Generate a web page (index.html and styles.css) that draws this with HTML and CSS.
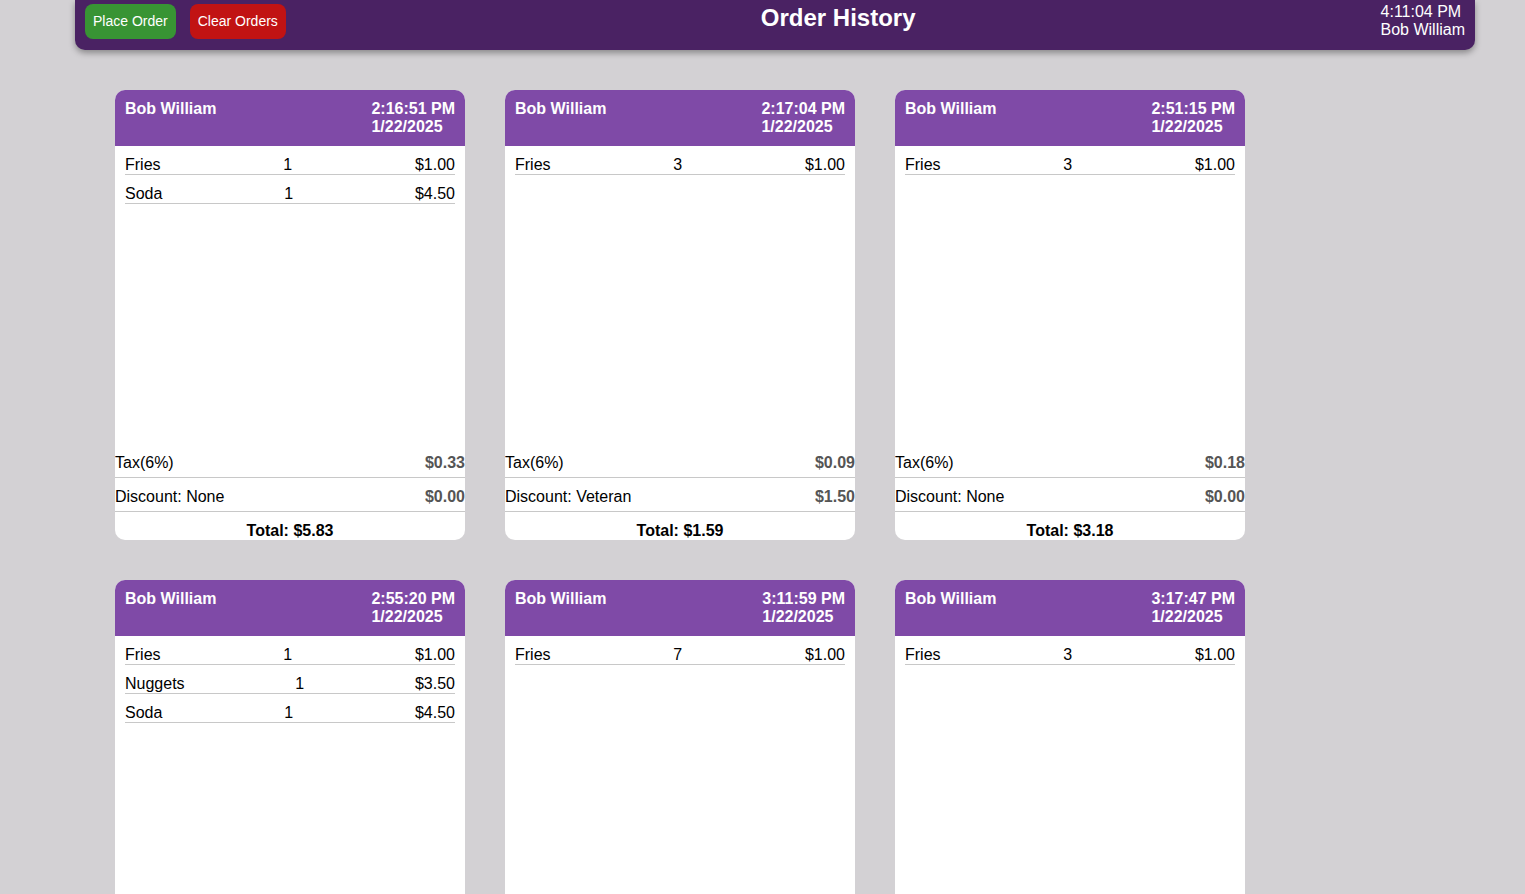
FILE: index.html
```html
<!DOCTYPE html>
<html>
<head>
<meta charset="utf-8">
<link rel="stylesheet" href="styles.css">
</head>
<body>
<header class="topbar">
  <div class="actions">
    <button class="btn btn-green">Place Order</button>
    <button class="btn btn-red">Clear Orders</button>
  </div>
  <h1 class="title">Order History</h1>
  <div class="session">
    <div>4:11:04 PM</div>
    <div>Bob William</div>
  </div>
</header>
<main class="orders">
  <div class="card">
    <div class="card-head"><div class="name">Bob William</div><div class="stamp"><div>2:16:51 PM</div><div>1/22/2025</div></div></div>
    <div class="items">
      <div class="item"><span>Fries</span><span>1</span><span>$1.00</span></div>
      <div class="item"><span>Soda</span><span>1</span><span>$4.50</span></div>
    </div>
    <div class="sum"><span>Tax(6%)</span><span class="val">$0.33</span></div>
    <div class="sum"><span>Discount: None</span><span class="val">$0.00</span></div>
    <div class="total">Total: $5.83</div>
  </div>
  <div class="card">
    <div class="card-head"><div class="name">Bob William</div><div class="stamp"><div>2:17:04 PM</div><div>1/22/2025</div></div></div>
    <div class="items">
      <div class="item"><span>Fries</span><span>3</span><span>$1.00</span></div>
    </div>
    <div class="sum"><span>Tax(6%)</span><span class="val">$0.09</span></div>
    <div class="sum"><span>Discount: Veteran</span><span class="val">$1.50</span></div>
    <div class="total">Total: $1.59</div>
  </div>
  <div class="card">
    <div class="card-head"><div class="name">Bob William</div><div class="stamp"><div>2:51:15 PM</div><div>1/22/2025</div></div></div>
    <div class="items">
      <div class="item"><span>Fries</span><span>3</span><span>$1.00</span></div>
    </div>
    <div class="sum"><span>Tax(6%)</span><span class="val">$0.18</span></div>
    <div class="sum"><span>Discount: None</span><span class="val">$0.00</span></div>
    <div class="total">Total: $3.18</div>
  </div>
  <div class="card">
    <div class="card-head"><div class="name">Bob William</div><div class="stamp"><div>2:55:20 PM</div><div>1/22/2025</div></div></div>
    <div class="items">
      <div class="item"><span>Fries</span><span>1</span><span>$1.00</span></div>
      <div class="item"><span>Nuggets</span><span>1</span><span>$3.50</span></div>
      <div class="item"><span>Soda</span><span>1</span><span>$4.50</span></div>
    </div>
    <div class="sum"><span>Tax(6%)</span><span class="val">$0.54</span></div>
    <div class="sum"><span>Discount: None</span><span class="val">$0.00</span></div>
    <div class="total">Total: $9.54</div>
  </div>
  <div class="card">
    <div class="card-head"><div class="name">Bob William</div><div class="stamp"><div>3:11:59 PM</div><div>1/22/2025</div></div></div>
    <div class="items">
      <div class="item"><span>Fries</span><span>7</span><span>$1.00</span></div>
    </div>
    <div class="sum"><span>Tax(6%)</span><span class="val">$0.42</span></div>
    <div class="sum"><span>Discount: None</span><span class="val">$0.00</span></div>
    <div class="total">Total: $7.42</div>
  </div>
  <div class="card">
    <div class="card-head"><div class="name">Bob William</div><div class="stamp"><div>3:17:47 PM</div><div>1/22/2025</div></div></div>
    <div class="items">
      <div class="item"><span>Fries</span><span>3</span><span>$1.00</span></div>
    </div>
    <div class="sum"><span>Tax(6%)</span><span class="val">$0.18</span></div>
    <div class="sum"><span>Discount: None</span><span class="val">$0.00</span></div>
    <div class="total">Total: $3.18</div>
  </div>
</main>
</body>
</html>
```
FILE: styles.css
```css
* { box-sizing: border-box; }
html, body {
  margin: 0;
  padding: 0;
  background: #d3d1d4;
  font-family: "Liberation Sans", Arial, sans-serif;
  font-size: 16px;
  color: #000;
}
.topbar {
  margin: 0 50px 0 75px;
  width: 1400px;
  height: 50px;
  background: #4a2263;
  border-radius: 0 0 10px 10px;
  box-shadow: 0 3px 6px rgba(0,0,0,0.35);
  display: flex;
  align-items: flex-start;
  padding: 0 10px;
  color: #fff;
}
.actions {
  display: flex;
  gap: 14px;
  padding-top: 4px;
  padding-right: 10px;
}
.btn {
  height: 35px;
  padding: 0 8px 2px;
  border: none;
  border-radius: 8px;
  color: #fff;
  font-family: "Liberation Sans", Arial, sans-serif;
  font-size: 14px;
}
.btn-green { background: #389434; }
.btn-red { background: #c11313; }
.title {
  flex: 1;
  text-align: center;
  margin: 0;
  padding-top: 4px;
  font-size: 24px;
  line-height: 28px;
  font-weight: bold;
}
.session {
  padding-top: 3px;
  line-height: 18px;
  text-align: left;
}
.orders {
  display: flex;
  flex-wrap: wrap;
  gap: 40px;
  margin: 0 75px;
  padding: 40px;
}
.card {
  width: 350px;
  height: 450px;
  background: #fff;
  border-radius: 10px;
  overflow: hidden;
  display: flex;
  flex-direction: column;
}
.card-head {
  background: #7f4aa7;
  color: #fff;
  font-weight: bold;
  display: flex;
  justify-content: space-between;
  padding: 10px 10px 10px;
  line-height: 18px;
  height: 56px;
}
.items {
  flex: 1;
  padding: 0 10px;
}
.item {
  display: flex;
  justify-content: space-between;
  padding-top: 10px;
  line-height: 18px;
  border-bottom: 1px solid #c8c8c8;
}
.sum {
  display: flex;
  justify-content: space-between;
  line-height: 18px;
  padding: 10px 0 5px;
  border-bottom: 1px solid #c8c8c8;
}
.val {
  font-weight: bold;
  color: #555;
}
.total {
  text-align: center;
  font-weight: bold;
  line-height: 18px;
  padding: 10px 0 0;
}
```
